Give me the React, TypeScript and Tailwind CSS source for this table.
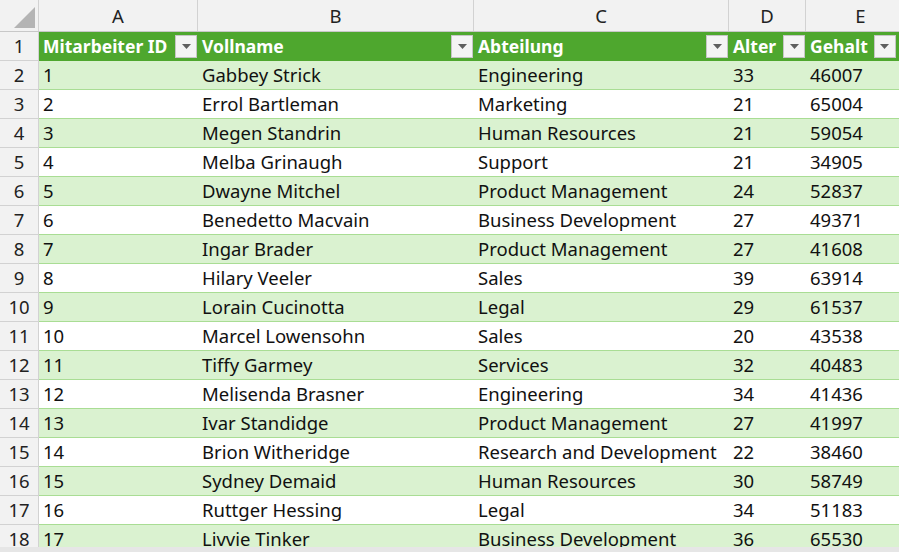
import React from "react";

type Row = { id: number; name: string; dept: string; age: number; salary: number };

const rows: Row[] = [
  { id: 1, name: "Gabbey Strick", dept: "Engineering", age: 33, salary: 46007 },
  { id: 2, name: "Errol Bartleman", dept: "Marketing", age: 21, salary: 65004 },
  { id: 3, name: "Megen Standrin", dept: "Human Resources", age: 21, salary: 59054 },
  { id: 4, name: "Melba Grinaugh", dept: "Support", age: 21, salary: 34905 },
  { id: 5, name: "Dwayne Mitchel", dept: "Product Management", age: 24, salary: 52837 },
  { id: 6, name: "Benedetto Macvain", dept: "Business Development", age: 27, salary: 49371 },
  { id: 7, name: "Ingar Brader", dept: "Product Management", age: 27, salary: 41608 },
  { id: 8, name: "Hilary Veeler", dept: "Sales", age: 39, salary: 63914 },
  { id: 9, name: "Lorain Cucinotta", dept: "Legal", age: 29, salary: 61537 },
  { id: 10, name: "Marcel Lowensohn", dept: "Sales", age: 20, salary: 43538 },
  { id: 11, name: "Tiffy Garmey", dept: "Services", age: 32, salary: 40483 },
  { id: 12, name: "Melisenda Brasner", dept: "Engineering", age: 34, salary: 41436 },
  { id: 13, name: "Ivar Standidge", dept: "Product Management", age: 27, salary: 41997 },
  { id: 14, name: "Brion Witheridge", dept: "Research and Development", age: 22, salary: 38460 },
  { id: 15, name: "Sydney Demaid", dept: "Human Resources", age: 30, salary: 58749 },
  { id: 16, name: "Ruttger Hessing", dept: "Legal", age: 34, salary: 51183 },
  { id: 17, name: "Livvie Tinker", dept: "Business Development", age: 36, salary: 65530 },
];

// column widths incl. the 1px line on the right
const cols = [
  { letter: "A", w: "w-[159px]", title: "Mitarbeiter ID" },
  { letter: "B", w: "w-[276px]", title: "Vollname" },
  { letter: "C", w: "w-[255px]", title: "Abteilung" },
  { letter: "D", w: "w-[77px]", title: "Alter" },
  { letter: "E", w: "w-[110px]", title: "Gehalt" },
];

const FilterButton = ({ last }: { last?: boolean }) => (
  <div
    className={`${
      last ? "ml-[6px]" : "ml-auto mr-px"
    } flex h-[23px] w-[22px] shrink-0 items-center justify-center border border-[#c6c6c6] bg-[#f4f4f4]`}
  >
    <svg width="9" height="5" viewBox="0 0 9 5">
      <path d="M0 0 H9 L4.5 5 Z" fill="#5f5f5f" />
    </svg>
  </div>
);

const RowNum = ({ n }: { n: number }) => (
  <div className="flex h-[29px] w-[39px] shrink-0 items-center justify-center border-r border-b border-[#d2d2d2] bg-[#f2f2f2] text-[18.5px] text-[#222]">
    {n}
  </div>
);

export default function App() {
  return (
    <div
      className="relative h-[552px] w-[899px] overflow-hidden bg-white text-[18.5px] text-[#111]"
      style={{ fontFamily: '"Noto Sans", "Open Sans", sans-serif' }}
    >
      {/* column letters */}
      <div className="flex h-[32px] border-b border-[#c8c8c8] bg-[#f2f2f2] text-[#222]">
        <div className="relative w-[39px] shrink-0 border-r border-[#d2d2d2]">
          <svg className="absolute left-[14px] top-[7px]" width="21" height="21" viewBox="0 0 21 21">
            <path d="M21 0 V21 H0 Z" fill="#b4b4b4" />
          </svg>
        </div>
        {cols.map((c) => (
          <div
            key={c.letter}
            className={`${c.w} flex shrink-0 items-center justify-center border-r border-[#d2d2d2]`}
          >
            {c.letter}
          </div>
        ))}
      </div>

      {/* table header */}
      <div className="flex">
        <RowNum n={1} />
        <div className="flex h-[29px] flex-1 bg-[#4ea72e] text-[17.5px] font-bold text-white">
          {cols.map((c) => (
            <div key={c.letter} className={`${c.w} flex shrink-0 items-center pl-[4px]`}>
              <span>{c.title}</span>
              <FilterButton last={c.letter === "E"} />
            </div>
          ))}
        </div>
      </div>

      {/* data rows */}
      {rows.map((r, i) => (
        <div key={r.id} className="flex">
          <RowNum n={i + 2} />
          <div
            className={`flex h-[29px] flex-1 items-center border-b border-[#a9dd94] ${
              i % 2 === 0 ? "bg-[#daf2d0]" : "bg-white"
            }`}
          >
            <div className="w-[159px] shrink-0 pl-[4px]">{r.id}</div>
            <div className="w-[276px] shrink-0 pl-[4px]">{r.name}</div>
            <div className="w-[255px] shrink-0 pl-[4px]">{r.dept}</div>
            <div className="w-[77px] shrink-0 pl-[4px]">{r.age}</div>
            <div className="w-[110px] shrink-0 pl-[4px]">{r.salary}</div>
          </div>
        </div>
      ))}

      {/* bottom strip */}
      <div className="absolute bottom-0 left-0 h-[5px] w-full bg-[#e6e6e6]" />
    </div>
  );
}
